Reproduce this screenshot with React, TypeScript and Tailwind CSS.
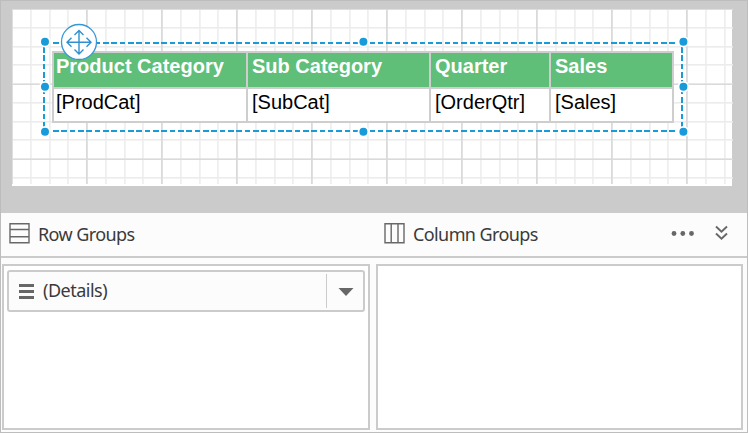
const columns = [
  { title: 'Product Category', field: '[ProdCat]' },
  { title: 'Sub Category', field: '[SubCat]' },
  { title: 'Quarter', field: '[OrderQtr]' },
  { title: 'Sales', field: '[Sales]' },
];

const minorX = Array.from({ length: 39 }, (_, i) => i).filter((i) => i % 4 !== 0);
const minorY = Array.from({ length: 10 }, (_, i) => i).filter((i) => i % 4 !== 0);

function GridPaper() {
  return (
    <svg className="absolute left-0 top-0" width="721" height="176" aria-hidden="true">
      {minorX.map((i) => (
        <rect key={`x${i}`} x={Math.round(i * 18.75) - 1} y="0" width="1.8" height="175" fill="#efefef" />
      ))}
      {minorY.map((i) => (
        <rect key={`y${i}`} x="0" y={Math.round(i * 18.75) - 1} width="721" height="1.6" fill="#ececec" />
      ))}
      <rect x="0" y="0" width="1" height="175" fill="#dedede" />
      <rect x="0" y="0" width="721" height="1" fill="#dedede" />
      {[75, 150, 225, 300, 375, 450, 525, 600, 675].map((x) => (
        <rect key={x} x={x - 1} y="0" width="1.8" height="175" fill="#dadada" />
      ))}
      {[75, 150].map((y) => (
        <rect key={y} x="0" y={y - 0.6} width="721" height="1.6" fill="#dadada" />
      ))}
    </svg>
  );
}

function Selection() {
  return (
    <svg className="absolute left-0 top-0" width="748" height="212" fill="none" aria-hidden="true">
      <g stroke="#189bd8" strokeWidth="2" strokeDasharray="5.6 2.73" shapeRendering="crispEdges">
        <path d="M53 43H682" />
        <path d="M53 131H682" />
        <path d="M44 47V131" />
        <path d="M682 47V131" />
      </g>
      {[45, 363.4, 683.4].map((x) =>
        [41.7, 86.7, 131.7].map((y) =>
          x === 363.4 && y === 86.7 ? null : (
            <circle key={`${x}-${y}`} cx={x} cy={y} r="4.9" fill="#189bd8" stroke="#fff" strokeWidth="1.8" />
          ),
        ),
      )}
      <circle cx="79" cy="42" r="17.5" fill="#fff" stroke="#3498d8" strokeWidth="1.3" />
      <path
        d="M79 30.5V54M67 42.3H91M74.5 35L79 30.5L83.5 35M74.5 49.5L79 54L83.5 49.5M71.5 37.8L67 42.3L71.5 46.8M86.5 37.8L91 42.3L86.5 46.8"
        stroke="#2f91d0"
        strokeWidth="1.4"
      />
    </svg>
  );
}

export default function App() {
  return (
    <div className="flex h-[433px] w-[748px] flex-col overflow-hidden border border-[#bdbdbd] bg-[#fcfcfc] font-['Noto_Sans','Open_Sans',sans-serif] text-[#3a3a3a]">
      <main className="relative h-[212px] shrink-0 bg-[#cbcbcb] pl-[11px] pt-2">
        <div className="relative h-[177px] w-[720px] bg-white pl-10 pt-[42px]">
          <GridPaper />
          <table className="relative w-[622px] table-fixed border-collapse font-['Liberation_Sans',Arial,sans-serif] text-[20px] leading-[23px] text-black">
            <colgroup>
              <col className="w-[194px]" />
              <col className="w-[183px]" />
              <col className="w-[120px]" />
              <col className="w-[123px]" />
            </colgroup>
            <thead>
              <tr className="h-9 bg-[#5fbe77] text-left align-top text-white">
                {columns.map((c) => (
                  <th key={c.title} className="border-2 border-[#cecece] pl-1 pt-0.5 align-top font-bold whitespace-nowrap first:pl-0.5">{c.title}</th>
                ))}
              </tr>
            </thead>
            <tbody>
              <tr className="h-[34px] bg-white">
                {columns.map((c) => (
                  <td key={c.field} className="border-2 border-[#cecece] pl-1 pt-0.5 align-top whitespace-nowrap first:pl-0.5">{c.field}</td>
                ))}
              </tr>
            </tbody>
          </table>
        </div>
        <div className="absolute -left-px -top-px"><Selection /></div>
      </main>

      <header className="flex h-[45px] shrink-0 items-center border-b-2 border-[#cbcbcb] text-[18px]">
        <div className="flex w-[375px] items-center gap-2 pl-2">
          <svg width="21" height="22" fill="none" stroke="#686868" strokeWidth="1.4" className="-mt-1">
            <path d="M1 1.7H20V20.7H1ZM1 7.5H20M1 14.7H20" />
          </svg>
          <span className="whitespace-nowrap tracking-[-0.6px]">Row Groups</span>
        </div>
        <div className="flex flex-1 items-center gap-2 pl-2">
          <svg width="21" height="22" fill="none" stroke="#686868" strokeWidth="1.4" className="-mt-1">
            <path d="M1 1.7H20V20.7H1ZM7.2 1.7V20.7M14 1.7V20.7" />
          </svg>
          <span className="whitespace-nowrap tracking-[-0.6px]">Column Groups</span>
        </div>
        <svg width="24" height="8" fill="#676767" className="-mt-0.5 mr-5">
          <circle cx="3" cy="3.5" r="2.4" />
          <circle cx="11.8" cy="3.5" r="2.4" />
          <circle cx="20.5" cy="3.5" r="2.4" />
        </svg>
        <svg width="14" height="16" fill="none" stroke="#686868" strokeWidth="1.9" className="mr-[18px] -mt-1">
          <path d="M1 1.5L6.5 6.8L12 1.5M1 8.5L6.5 13.8L12 8.5" />
        </svg>
      </header>

      <section className="flex flex-1 gap-1.5 pb-0.5 pl-px pr-1 pt-1.5">
        <div className="w-[368px] border-2 border-[#cbcbcb] bg-white px-[3px] pt-1">
          <div className="flex h-[42px] items-center rounded-[3px] border-2 border-[#cbcbcb] bg-[#fcfcfc] pl-2.5">
            <svg width="15" height="15" fill="#676767">
              <path d="M0 0H15V3H0ZM0 6H15V9H0ZM0 12H15V15H0Z" />
            </svg>
            <span className="-mt-0.5 ml-[9px] flex-1 text-[18px] leading-6 tracking-[-0.5px]">(Details)</span>
            <div className="flex h-[34px] w-[37px] items-center border-l border-[#cbcbcb] pl-[11px]">
              <svg width="16" height="8" fill="#676767" className="mt-0.5"><path d="M0.5 0H15.5L8 8Z" /></svg>
            </div>
          </div>
        </div>
        <div className="flex-1 border-2 border-[#cbcbcb] bg-white" />
      </section>
    </div>
  );
}
